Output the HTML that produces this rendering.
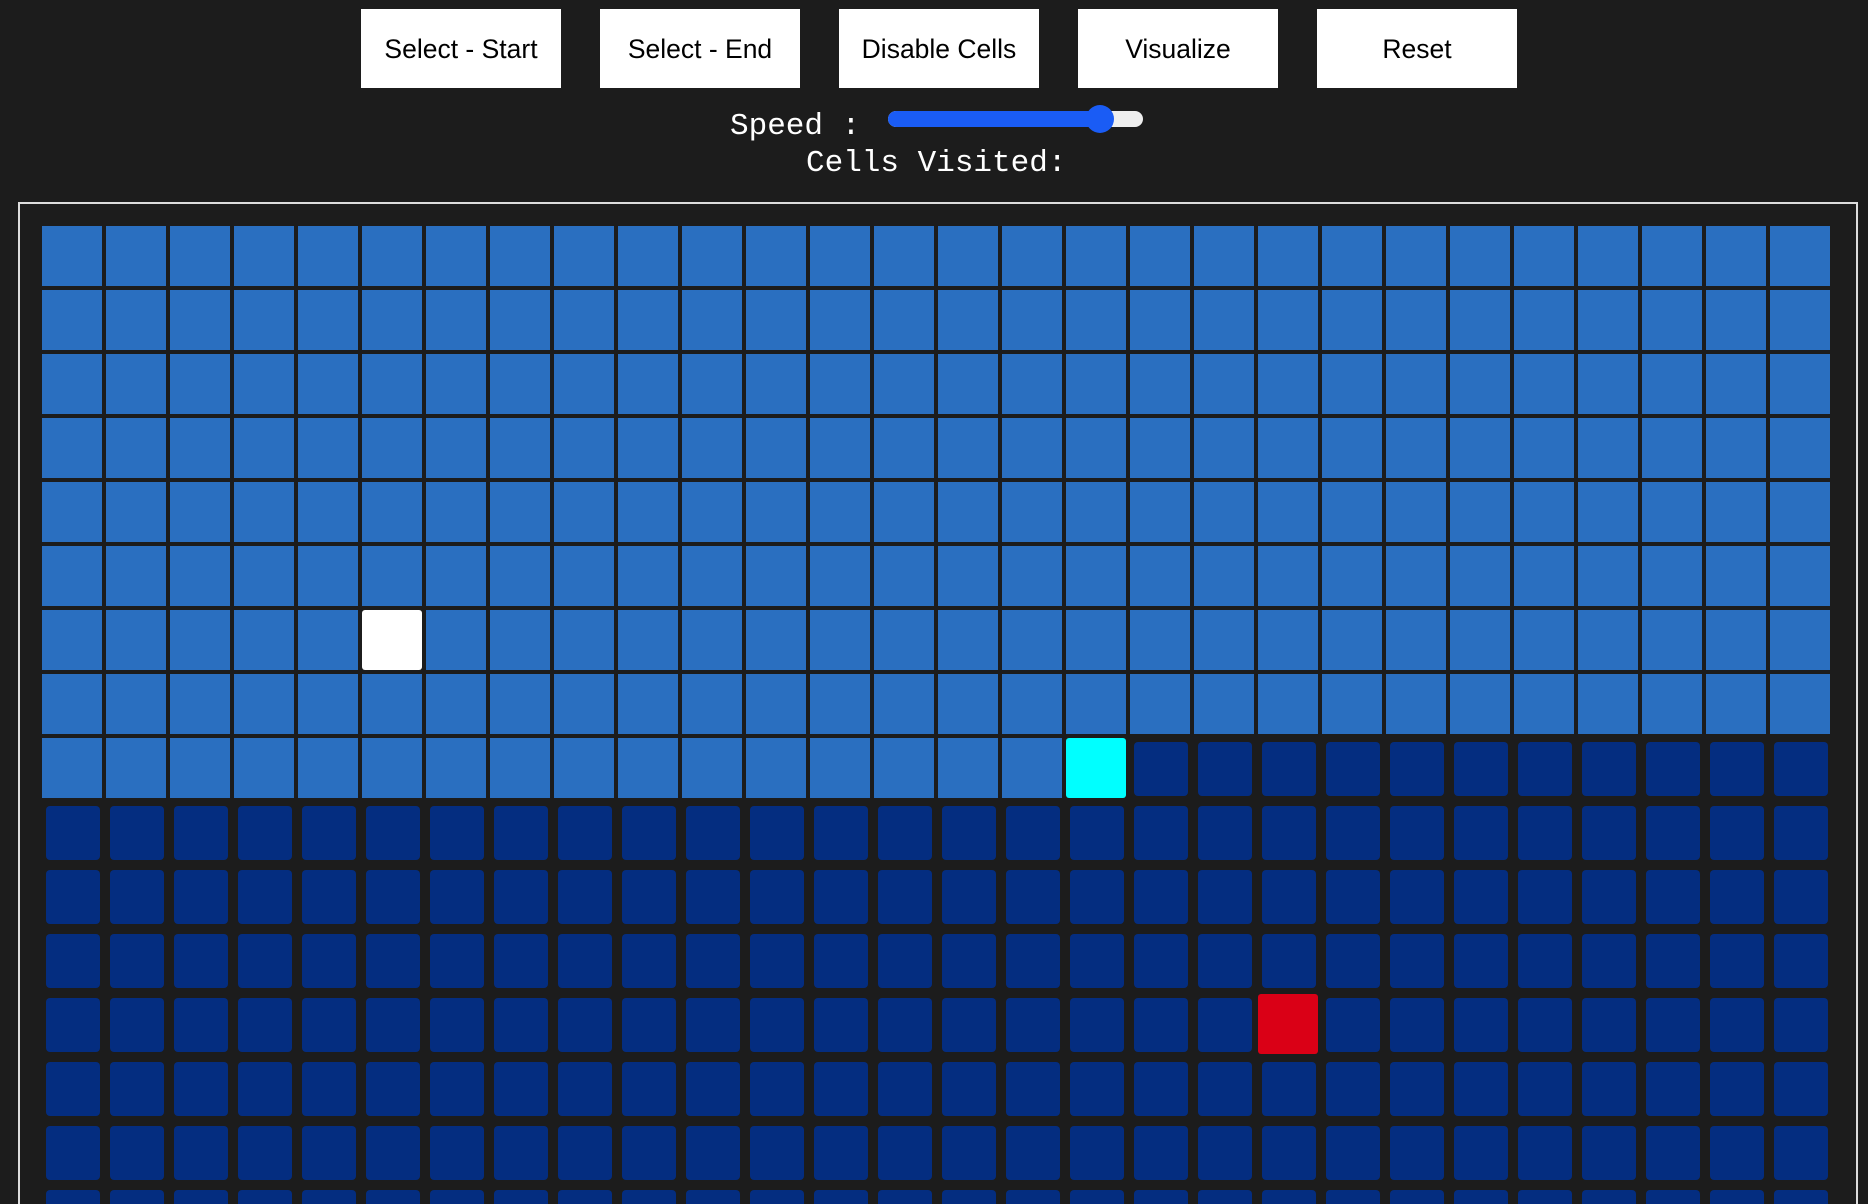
<!DOCTYPE html>
<html><head><meta charset="utf-8"><style>
html,body{margin:0;padding:0;background:#1c1c1c;width:1868px;height:1204px;overflow:hidden;position:relative}
.btn{position:absolute;top:9px;width:200px;height:79px;background:#fff;color:#000;font:26.5px "Liberation Sans",sans-serif;display:flex;align-items:center;justify-content:center;padding-top:1px;box-sizing:border-box}
.mono{position:absolute;color:#fff;font:31px "Liberation Mono",monospace;white-space:pre;line-height:1}
#border{position:absolute;left:18px;top:202px;width:1836px;height:1000px;border:2px solid #ddd;border-bottom:none}
.c{position:absolute;width:60px;height:60px;background:#2a6fc0}
.d{position:absolute;width:54px;height:54px;background:#042d80;border-radius:4px}
</style></head><body>
<div class="btn" style="left:361px">Select - Start</div>
<div class="btn" style="left:600px">Select - End</div>
<div class="btn" style="left:839px">Disable Cells</div>
<div class="btn" style="left:1078px">Visualize</div>
<div class="btn" style="left:1317px">Reset</div>
<div class="mono" style="left:730px;top:111px">Speed :</div>
<div style="position:absolute;left:888px;top:111px;width:255px;height:16px;border-radius:8px;background:#eee"></div>
<div style="position:absolute;left:888px;top:111px;width:212px;height:16px;border-radius:8px;background:#1a5cf5"></div>
<div style="position:absolute;left:1086px;top:105px;width:28px;height:28px;border-radius:50%;background:#1a5cf5"></div>
<div class="mono" style="left:806px;top:148px">Cells Visited:</div>
<div id="border"></div>
<div id="g"></div>
<script>
var h='';
for(var r=0;r<16;r++)for(var c=0;c<28;c++){
var x=42+c*64,y=226+r*64;
var vis=r<8||(r==8&&c<16);
if(r==6&&c==5)h+='<div class="c" style="left:'+x+'px;top:'+y+'px;background:#fff;border-radius:3px"></div>';
else if(r==8&&c==16)h+='<div class="c" style="left:'+x+'px;top:'+y+'px;background:#00ffff;border-radius:3px"></div>';
else if(r==12&&c==19)h+='<div class="c" style="left:'+x+'px;top:'+y+'px;background:#da0016;border-radius:3px"></div>';
else if(vis)h+='<div class="c" style="left:'+x+'px;top:'+y+'px"></div>';
else h+='<div class="d" style="left:'+(x+4)+'px;top:'+(y+4)+'px"></div>';
}
document.getElementById('g').innerHTML=h;
</script>
</body></html>
